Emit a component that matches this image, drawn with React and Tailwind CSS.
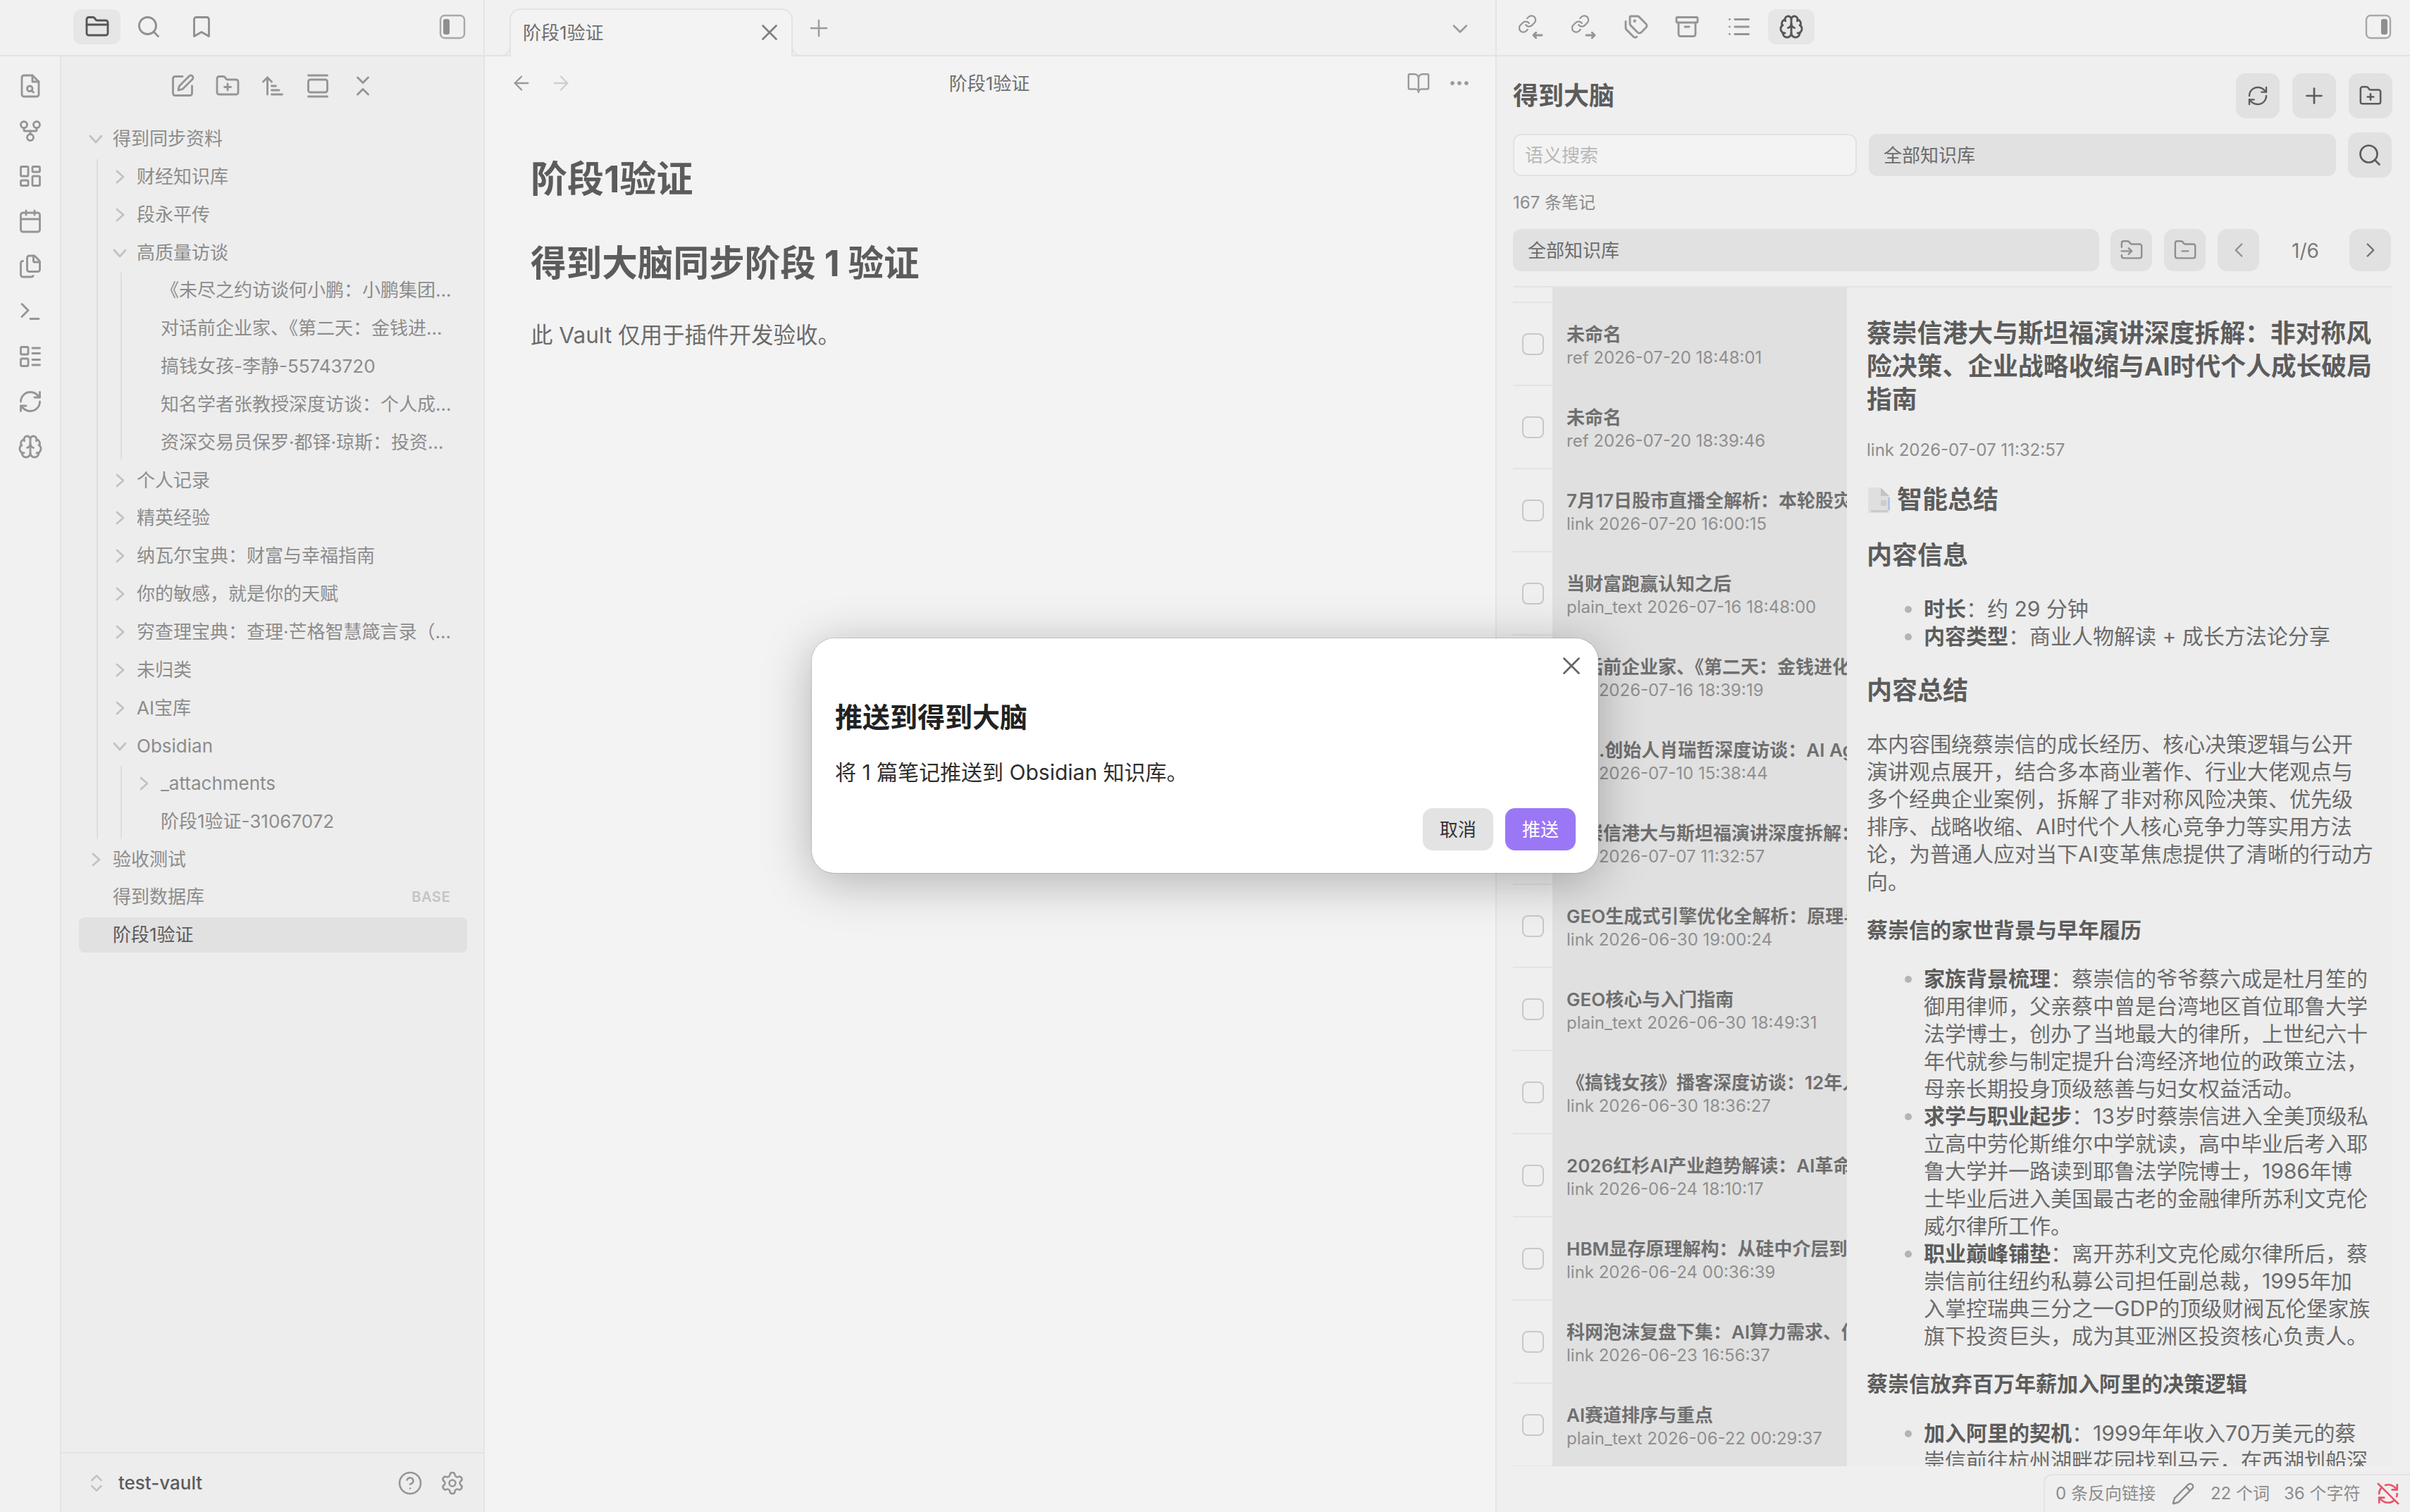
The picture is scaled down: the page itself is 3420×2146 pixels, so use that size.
import React from "react";
import {
  GitFork, LayoutDashboard, Calendar, Files, Terminal, LayoutList, RefreshCw, Brain, SquarePen, FolderPlus,
  ArrowUpNarrowWide, GalleryVertical, ChevronsDownUp, CircleHelp, Settings, X, Plus, ChevronDown, ArrowLeft,
  ArrowRight, BookOpen, Ellipsis, Tags, Archive, List, Search, Bookmark, FolderClosed, FolderInput, FolderMinus,
  ChevronLeft, ChevronRight, ChevronsUpDown, Pencil, RefreshCwOff,
} from "lucide-react";

const Toggle = ({ right }) => (
  <svg width="38" height="38" viewBox="0 0 38 38" fill="none">
    <rect x="2" y="3" width="34" height="32" rx="6" stroke="#a8a8a8" strokeWidth="2.4" />
    <rect x={right ? 23 : 6} y="8" width="9" height="22" rx="3" fill="#8f8f8f" />
  </svg>
);

const FileSearchIcon = () => (
  <svg width="36" height="36" viewBox="0 0 24 24" fill="none" stroke="currentColor" strokeWidth="1.9" strokeLinecap="round" strokeLinejoin="round">
    <path d="M14 2H6a2 2 0 0 0-2 2v16a2 2 0 0 0 2 2h12a2 2 0 0 0 2-2V8z" />
    <path d="M14 2v6h6" />
    <circle cx="11.5" cy="14.5" r="2.5" />
    <path d="m13.3 16.3 1.7 1.7" />
  </svg>
);

const LinkArrow = ({ out }) => (
  <svg width="36" height="36" viewBox="0 0 24 24" fill="none" stroke="currentColor" strokeWidth="1.9" strokeLinecap="round" strokeLinejoin="round">
    <g transform="translate(-1 0) scale(0.78)">
      <path d="M10 13a5 5 0 0 0 7.54.54l3-3a5 5 0 0 0-7.07-7.07l-1.72 1.71" />
      <path d="M14 11a5 5 0 0 0-7.54-.54l-3 3a5 5 0 0 0 7.07 7.07l1.71-1.71" />
    </g>
    {out ? <path d="M14 20h8M19.5 17.5 22 20l-2.5 2.5" /> : <path d="M22 20h-8M16.5 17.5 14 20l2.5 2.5" />}
  </svg>
);

const Chev = ({ open }) => (
  <svg width="24" height="24" viewBox="0 0 24 24" fill="none" stroke="#c2c2c2" strokeWidth="2.8" strokeLinecap="round" strokeLinejoin="round" className={open ? "" : "-rotate-90"}>
    <path d="M4 8l8 9 8-9" />
  </svg>
);

const Row = ({ label, chev, open, pl = 0, active, badge }) => (
  <div className={`flex items-center h-[50px] mb-[3.85px] rounded-[8px] pr-[22px] ${active ? "bg-[#e1e1e1] text-[#5c5c5c]" : "text-[#8c8c8c]"}`} style={{ paddingLeft: pl }}>
    <span className="w-[48px] shrink-0 flex items-center justify-center">{chev && <Chev open={open} />}</span>
    <span className="flex-1 min-w-0 truncate text-[26px] leading-[34px]">{label}</span>
    {badge && <span className="mr-[2px] text-[20px] font-semibold tracking-[0.5px] text-[#c4c4c4]">{badge}</span>}
  </div>
);

const Guide1 = ({ children }) => <div className="ml-[25px] border-l-2 border-[#dedede] mb-[-0.5px]">{children}</div>;
const Guide2 = ({ children }) => <div className="ml-[32px] border-l-2 border-[#dedede]">{children}</div>;

const Sq = ({ children, w = "w-[62px]", h = "h-[64px]" }) => (
  <div className={`${w} ${h} shrink-0 rounded-[14px] bg-[#e1e1e1] text-[#5c5c5c] flex items-center justify-center`}>{children}</div>
);

const notes = [
  ["未命名", "ref 2026-07-20 18:48:01"],
  ["未命名", "ref 2026-07-20 18:39:46"],
  ["7月17日股市直播全解析：本轮股灾的成因与应对", "link 2026-07-20 16:00:15"],
  ["当财富跑赢认知之后", "plain_text 2026-07-16 18:48:00"],
  ["对话前企业家、《第二天：金钱进化论》作者", "link 2026-07-16 18:39:19"],
  [".创始人肖瑞哲深度访谈：AI Agent", "link 2026-07-10 15:38:44", true],
  ["蔡崇信港大与斯坦福演讲深度拆解：非对称风险决策", "link 2026-07-07 11:32:57"],
  ["GEO生成式引擎优化全解析：原理与实践方法", "link 2026-06-30 19:00:24"],
  ["GEO核心与入门指南", "plain_text 2026-06-30 18:49:31"],
  ["《搞钱女孩》播客深度访谈：12年人生复盘", "link 2026-06-30 18:36:27"],
  ["2026红杉AI产业趋势解读：AI革命的下一步", "link 2026-06-24 18:10:17"],
  ["HBM显存原理解构：从硅中介层到堆叠工艺", "link 2026-06-24 00:36:39"],
  ["科网泡沫复盘下集：AI算力需求、估值与泡沫", "link 2026-06-23 16:56:37"],
  ["AI赛道排序与重点", "plain_text 2026-06-22 00:29:37"],
];

const Li = ({ lead, children }) => (
  <li className="flex text-[30px] leading-[39px]">
    <span className="w-[81px] shrink-0 flex justify-end pr-[17px] pt-[15px]">
      <span className="block w-[10px] h-[10px] rounded-full bg-[#b4b4b4]"></span>
    </span>
    <span className="flex-1 min-w-0">
      {lead && <strong className="font-semibold text-[#5c5c5c]">{lead}</strong>}
      {children}
    </span>
  </li>
);

const PageEmoji = () => (
  <svg width="34" height="36" viewBox="0 0 34 36" className="shrink-0">
    <path d="M2 0h18l12 12v24H2z" fill="#dfdfdf" />
    <path d="M20 0l12 12H20z" fill="#c4c4c4" />
    <rect x="6" y="32" width="24" height="3" fill="#cacaca" />
    <rect x="30" y="14" width="3" height="18" fill="#b0c6e4" />
    <rect x="20" y="18" width="8" height="8" fill="#cdcdcd" />
  </svg>
);

export default function App() {
  return (
    <div className="relative flex w-[3420px] h-[2146px] overflow-hidden bg-[#f3f3f3] font-[Inter,'Noto_Sans_CJK_SC',sans-serif]">
      {/* left */}
      <div className="w-[688px] h-full flex flex-col border-r-2 border-[#e4e4e4]">
        <div className="h-[80px] shrink-0 flex items-center bg-[#f1f1f1] border-b-2 border-[#e3e3e3] pl-[104px] pr-[25px] pb-[2px]">
          <div className="w-[67px] h-[50px] rounded-[12px] bg-[#e6e6e6] text-[#555] flex items-center justify-center"><FolderClosed size={36} strokeWidth={1.9} /></div>
          <div className="w-[80px] h-[50px] text-[#8f8f8f] flex items-center justify-center"><Search size={36} strokeWidth={1.9} /></div>
          <div className="w-[69px] h-[50px] text-[#8f8f8f] flex items-center justify-center"><Bookmark size={36} strokeWidth={1.9} /></div>
          <div className="ml-auto"><Toggle /></div>
        </div>
        <div className="flex-1 min-h-0 flex">
          <div className="w-[87px] shrink-0 bg-[#f1f1f1] border-r-2 border-[#e4e4e4] pt-[24px] flex flex-col items-center gap-[28px] text-[#959595]">
            <FileSearchIcon />
            <GitFork size={36} strokeWidth={1.9} />
            <LayoutDashboard size={36} strokeWidth={1.9} />
            <Calendar size={36} strokeWidth={1.9} />
            <Files size={36} strokeWidth={1.9} />
            <Terminal size={36} strokeWidth={1.9} />
            <LayoutList size={36} strokeWidth={1.9} />
            <RefreshCw size={36} strokeWidth={1.9} />
            <Brain size={36} strokeWidth={1.9} />
          </div>
          <div className="flex-1 min-w-0 flex flex-col bg-[#ededed]">
            <div className="h-[84px] shrink-0 flex items-center justify-center gap-[28px] text-[#959595]">
              <SquarePen size={36} strokeWidth={1.9} />
              <FolderPlus size={36} strokeWidth={1.9} />
              <ArrowUpNarrowWide size={36} strokeWidth={1.9} />
              <GalleryVertical size={36} strokeWidth={1.9} />
              <ChevronsDownUp size={36} strokeWidth={1.9} />
            </div>
            <div className="flex-1 min-h-0 mt-[8px] pl-[25px] pr-[23px]">
              <Row label="得到同步资料" chev open />
              <Guide1>
                <Row pl={7} label="财经知识库" chev />
                <Row pl={7} label="段永平传" chev />
                <Row pl={7} label="高质量访谈" chev open />
                <Guide2>
                  <Row pl={7} label="《未尽之约访谈何小鹏：小鹏集团掌门人的创业之路" />
                  <Row pl={7} label="对话前企业家、《第二天：金钱进化论》作者深度" />
                  <Row pl={7} label="搞钱女孩-李静-55743720" />
                  <Row pl={7} label="知名学者张教授深度访谈：个人成长与认知升级" />
                  <Row pl={7} label="资深交易员保罗·都铎·琼斯：投资哲学与风险管理" />
                </Guide2>
                <Row pl={7} label="个人记录" chev />
                <Row pl={7} label="精英经验" chev />
                <Row pl={7} label="纳瓦尔宝典：财富与幸福指南" chev />
                <Row pl={7} label="你的敏感，就是你的天赋" chev />
                <Row pl={7} label="穷查理宝典：查理·芒格智慧箴言录（全新增订本）" chev />
                <Row pl={7} label="未归类" chev />
                <Row pl={7} label="AI宝库" chev />
                <Row pl={7} label="Obsidian" chev open />
                <Guide2>
                  <Row pl={7} label="_attachments" chev />
                  <Row pl={7} label="阶段1验证-31067072" />
                </Guide2>
              </Guide1>
              <Row label="验收测试" chev />
              <Row label="得到数据库" badge="BASE" />
              <Row label="阶段1验证" active />
            </div>
            <div className="h-[85px] shrink-0 border-t-2 border-[#e3e3e3] flex items-center pl-[34px] pr-[26px]">
              <ChevronsUpDown size={32} strokeWidth={1.9} className="text-[#c2c2c2]" />
              <span className="ml-[15px] text-[26px] font-medium text-[#5c5c5c]">test-vault</span>
              <CircleHelp size={36} strokeWidth={1.7} className="ml-auto text-[#959595]" />
              <Settings size={36} strokeWidth={1.7} className="ml-[24px] text-[#959595]" />
            </div>
          </div>
        </div>
      </div>

      {/* main */}
      <div className="w-[1436px] h-full flex flex-col border-r-2 border-[#e4e4e4]">
        <div className="h-[80px] shrink-0 flex bg-[#f1f1f1] border-b-2 border-[#e3e3e3] pl-[35px] pr-[32px]">
          <div className="relative w-[402px] h-[68px] mt-[12px] bg-[#f3f3f3] border-2 border-b-0 border-[#e3e3e3] rounded-t-[16px] flex items-center pl-[17px] pr-[12px] pb-[2px]">
            <span className="text-[26px] text-[#6f6f6f]">阶段1验证</span>
            <X size={38} strokeWidth={1.7} className="ml-auto text-[#7f7f7f]" />
            <svg width="14" height="14" viewBox="0 0 14 14" fill="none" className="absolute bottom-0 left-[-15px]"><path d="M14 0c0 8-6 13-14 13" stroke="#e3e3e3" strokeWidth="2" /></svg>
            <svg width="14" height="14" viewBox="0 0 14 14" fill="none" className="absolute bottom-0 right-[-15px]"><path d="M0 0c0 8 6 13 14 13" stroke="#e3e3e3" strokeWidth="2" /></svg>
          </div>
          <Plus size={38} strokeWidth={1.5} className="mt-[21px] ml-[18px] text-[#9a9a9a]" />
          <ChevronDown size={36} strokeWidth={1.7} className="mt-[23px] ml-auto text-[#9a9a9a]" />
        </div>
        <div className="h-[76px] shrink-0 flex items-center pl-[36px] pr-[34px]">
          <ArrowLeft size={32} strokeWidth={1.7} className="text-[#9a9a9a]" />
          <ArrowRight size={32} strokeWidth={1.7} className="ml-[24px] text-[#cfcfcf]" />
          <span className="flex-1 text-center text-[26px] text-[#6f6f6f]">阶段1验证</span>
          <BookOpen size={34} strokeWidth={1.7} className="text-[#9a9a9a]" />
          <Ellipsis size={34} strokeWidth={2} className="ml-[24px] text-[#9a9a9a]" />
        </div>
        <div className="pl-[65px] flex-1">
          <h1 className="mt-[68px] text-[52px] leading-[62px] font-bold text-[#5c5c5c]">阶段1验证</h1>
          <h1 className="mt-[58px] text-[50.6px] leading-[60px] font-bold text-[#5c5c5c]">得到大脑同步阶段 1 验证</h1>
          <p className="mt-[48px] text-[31.5px] leading-[48px] text-[#6b6b6b]">此 Vault 仅用于插件开发验收。</p>
        </div>
      </div>

      {/* right */}
      <div className="relative flex-1 min-w-0 h-full flex flex-col bg-[#efefef]">
        <div className="h-[80px] shrink-0 flex items-center bg-[#f1f1f1] border-b-2 border-[#e3e3e3] pl-[31px] pr-[26px] pb-[2px] text-[#959595]">
          <div className="w-[74.5px] flex"><LinkArrow /></div>
          <div className="w-[74.5px] flex"><LinkArrow out /></div>
          <div className="w-[72px] flex"><Tags size={36} strokeWidth={1.9} /></div>
          <div className="w-[74px] flex"><Archive size={36} strokeWidth={1.9} /></div>
          <div className="w-[59px] flex"><List size={36} strokeWidth={1.9} /></div>
          <div className="w-[66px] h-[50px] rounded-[12px] bg-[#e6e6e6] text-[#555] flex items-center justify-center"><Brain size={36} strokeWidth={1.9} /></div>
          <div className="ml-auto"><Toggle right /></div>
        </div>
        <div className="flex-1 min-h-0 pl-[23px] pr-[25px] flex flex-col">
          <div className="flex items-center mt-[24px] h-[64px] shrink-0 gap-[18px]">
            <span className="text-[36px] font-bold text-[#5c5c5c] mr-auto">得到大脑</span>
            <Sq><RefreshCw size={32} strokeWidth={1.8} /></Sq>
            <Sq><Plus size={36} strokeWidth={1.8} /></Sq>
            <Sq><FolderPlus size={34} strokeWidth={1.8} /></Sq>
          </div>
          <div className="flex items-center mt-[20px] h-[64px] shrink-0 gap-[17px]">
            <div className="w-[488px] h-[60px] rounded-[12px] bg-[#f3f3f3] border-2 border-[#e2e2e2] pl-[15px] flex items-center text-[26px] text-[#b8b8b8]">语义搜索</div>
            <div className="w-[663px] h-[60px] rounded-[12px] bg-[#e1e1e1] pl-[21px] flex items-center text-[26px] text-[#6b6b6b]">全部知识库</div>
            <Sq><Search size={36} strokeWidth={1.8} /></Sq>
          </div>
          <div className="mt-[20px] h-[31px] shrink-0 text-[24px] leading-[31px] text-[#8c8c8c]">167 条笔记</div>
          <div className="flex items-center mt-[22px] h-[60px] shrink-0">
            <div className="w-[832px] h-[60px] rounded-[12px] bg-[#e1e1e1] pl-[21px] flex items-center text-[26px] text-[#6b6b6b]">全部知识库</div>
            <div className="ml-[16px] flex gap-[17px]">
              <Sq w="w-[59px]" h="h-[60px]"><FolderInput size={34} strokeWidth={1.7} className="text-[#8f8f8f]" /></Sq>
              <Sq w="w-[59px]" h="h-[60px]"><FolderMinus size={34} strokeWidth={1.7} className="text-[#8f8f8f]" /></Sq>
              <Sq w="w-[59px]" h="h-[60px]"><ChevronLeft size={34} strokeWidth={1.7} className="text-[#8f8f8f]" /></Sq>
            </div>
            <span className="w-[128px] pl-[3px] pt-[1px] text-center text-[28px] text-[#7a7a7a]">1/6</span>
            <Sq w="w-[59px]" h="h-[60px]"><ChevronRight size={34} strokeWidth={1.7} className="text-[#6f6f6f]" /></Sq>
          </div>
          <div className="mt-[21px] h-[1675px] shrink-0 border-t-2 border-[#e3e3e3] flex overflow-hidden">
            <div className="w-[474px] shrink-0">
              <div className="flex h-[20px]">
                <div className="w-[56px]"></div>
                <div className="w-[418px] bg-[#e0e0e0]"></div>
              </div>
              {notes.map(([t, s, hidden], i) => (
                <div key={i} className="flex h-[118px]">
                  <div className="w-[56px] shrink-0 border-t-2 border-[#e3e3e3] pl-[13px] flex items-center">
                    <span className="block w-[31px] h-[31px] rounded-[8px] border-2 border-[#c8c8c8] bg-[#efefef]"></span>
                  </div>
                  <div className="w-[418px] shrink-0 bg-[#e0e0e0] pl-[20px] pt-[30px] overflow-hidden whitespace-nowrap">
                    <div className={`text-[26px] leading-[34px] font-semibold text-[#6f6f6f] ${hidden ? "pl-[46px]" : ""}`}>{t}</div>
                    <div className="text-[24px] leading-[31px] text-[#8f8f8f]">{s}</div>
                  </div>
                </div>
              ))}
              <div className="flex h-[2px]">
                <div className="w-[56px] border-t-2 border-[#e3e3e3]"></div>
                <div className="w-[418px] bg-[#e0e0e0]"></div>
              </div>
            </div>
            <div className="flex-1 min-w-0 bg-[#ededed] pl-[28px] text-[#6b6b6b]">
              <div className="w-[718px]">
                <h2 className="mt-[42px] text-[35.8px] leading-[47px] font-bold text-[#5c5c5c]">蔡崇信港大与斯坦福演讲深度拆解：非对称风险决策、企业战略收缩与AI时代个人成长破局指南</h2>
                <div className="mt-[32px] text-[24px] leading-[31px] text-[#8c8c8c]">link 2026-07-07 11:32:57</div>
                <h3 className="mt-[32px] flex items-center gap-[9px] text-[36px] leading-[47px] font-bold text-[#5c5c5c]"><PageEmoji />智能总结</h3>
                <h3 className="mt-[32px] text-[36px] leading-[47px] font-bold text-[#5c5c5c]">内容信息</h3>
                <ul className="mt-[33px]">
                  <Li lead="时长">：约 29 分钟</Li>
                  <Li lead="内容类型">：商业人物解读 + 成长方法论分享</Li>
                </ul>
                <h3 className="mt-[34px] text-[36px] leading-[47px] font-bold text-[#5c5c5c]">内容总结</h3>
                <p className="mt-[32.5px] text-[30px] leading-[39px] whitespace-nowrap">
                  本内容围绕蔡崇信的成长经历、核心决策逻辑与公开<br />
                  演讲观点展开，结合多本商业著作、行业大佬观点与<br />
                  多个经典企业案例，拆解了非对称风险决策、优先级<br />
                  排序、战略收缩、AI时代个人核心竞争力等实用方法<br />
                  论，为普通人应对当下AI变革焦虑提供了清晰的行动方<br />
                  向。
                </p>
                <h4 className="mt-[30px] text-[30px] leading-[39px] font-bold text-[#5c5c5c]">蔡崇信的家世背景与早年履历</h4>
                <ul className="mt-[30.5px]">
                  <Li lead="家族背景梳理">：蔡崇信的爷爷蔡六成是杜月笙的<br />御用律师，父亲蔡中曾是台湾地区首位耶鲁大学<br />法学博士，创办了当地最大的律所，上世纪六十<br />年代就参与制定提升台湾经济地位的政策立法，<br />母亲长期投身顶级慈善与妇女权益活动。</Li>
                  <Li lead="求学与职业起步">：13岁时蔡崇信进入全美顶级私<br />立高中劳伦斯维尔中学就读，高中毕业后考入耶<br />鲁大学并一路读到耶鲁法学院博士，1986年博<br />士毕业后进入美国最古老的金融律所苏利文克伦<br />威尔律所工作。</Li>
                  <Li lead="职业巅峰铺垫">：离开苏利文克伦威尔律所后，蔡<br />崇信前往纽约私募公司担任副总裁，1995年加<br />入掌控瑞典三分之一GDP的顶级财阀瓦伦堡家族<br />旗下投资巨头，成为其亚洲区投资核心负责人。</Li>
                </ul>
                <h4 className="mt-[29px] text-[30px] leading-[39px] font-bold text-[#5c5c5c]">蔡崇信放弃百万年薪加入阿里的决策逻辑</h4>
                <ul className="mt-[30.5px]">
                  <Li lead="加入阿里的契机">：1999年年收入70万美元的蔡<br />崇信前往杭州湖畔花园找到马云，在西湖划船深<br />谈之后决定加入阿里巴巴。</Li>
                </ul>
              </div>
            </div>
          </div>
        </div>
        <div className="absolute right-0 bottom-0 w-[520px] h-[54px] bg-[#efefef] border-t-2 border-l-2 border-[#e3e3e3] rounded-tl-[12px] flex items-center pl-[15px] text-[24px] text-[#8c8c8c]">
          <span>0 条反向链接</span>
          <Pencil size={34} strokeWidth={1.7} className="ml-[22px]" />
          <span className="ml-[22px]">22 个词</span>
          <span className="ml-[20px]">36 个字符</span>
          <RefreshCwOff size={34} strokeWidth={1.9} className="ml-auto mr-[14px] text-[#e9536b]" />
        </div>
      </div>

      {/* modal */}
      <div className="absolute left-[1152px] top-[906px] w-[1116px] h-[333px] rounded-[32px] bg-white pl-[33px] pr-[32px] pt-[87px] shadow-[0_0_0_1px_rgba(0,0,0,0.12),0_12px_70px_rgba(0,0,0,0.28)]">
        <X size={42} strokeWidth={1.6} className="absolute right-[17px] top-[18px] text-[#666]" />
        <div className="text-[39px] leading-[50px] font-bold text-[#222]">推送到得到大脑</div>
        <div className="mt-[34px] text-[30px] leading-[39px] text-[#2e2e2e]">将 1 篇笔记推送到 Obsidian 知识库。</div>
        <div className="mt-[31px] flex justify-end gap-[17px]">
          <div className="w-[100px] h-[60px] rounded-[14px] bg-[#e3e3e3] flex items-center justify-center text-[26px] text-[#333]">取消</div>
          <div className="w-[100px] h-[60px] rounded-[14px] bg-[#9b77f6] flex items-center justify-center text-[26px] text-white">推送</div>
        </div>
      </div>
    </div>
  );
}
